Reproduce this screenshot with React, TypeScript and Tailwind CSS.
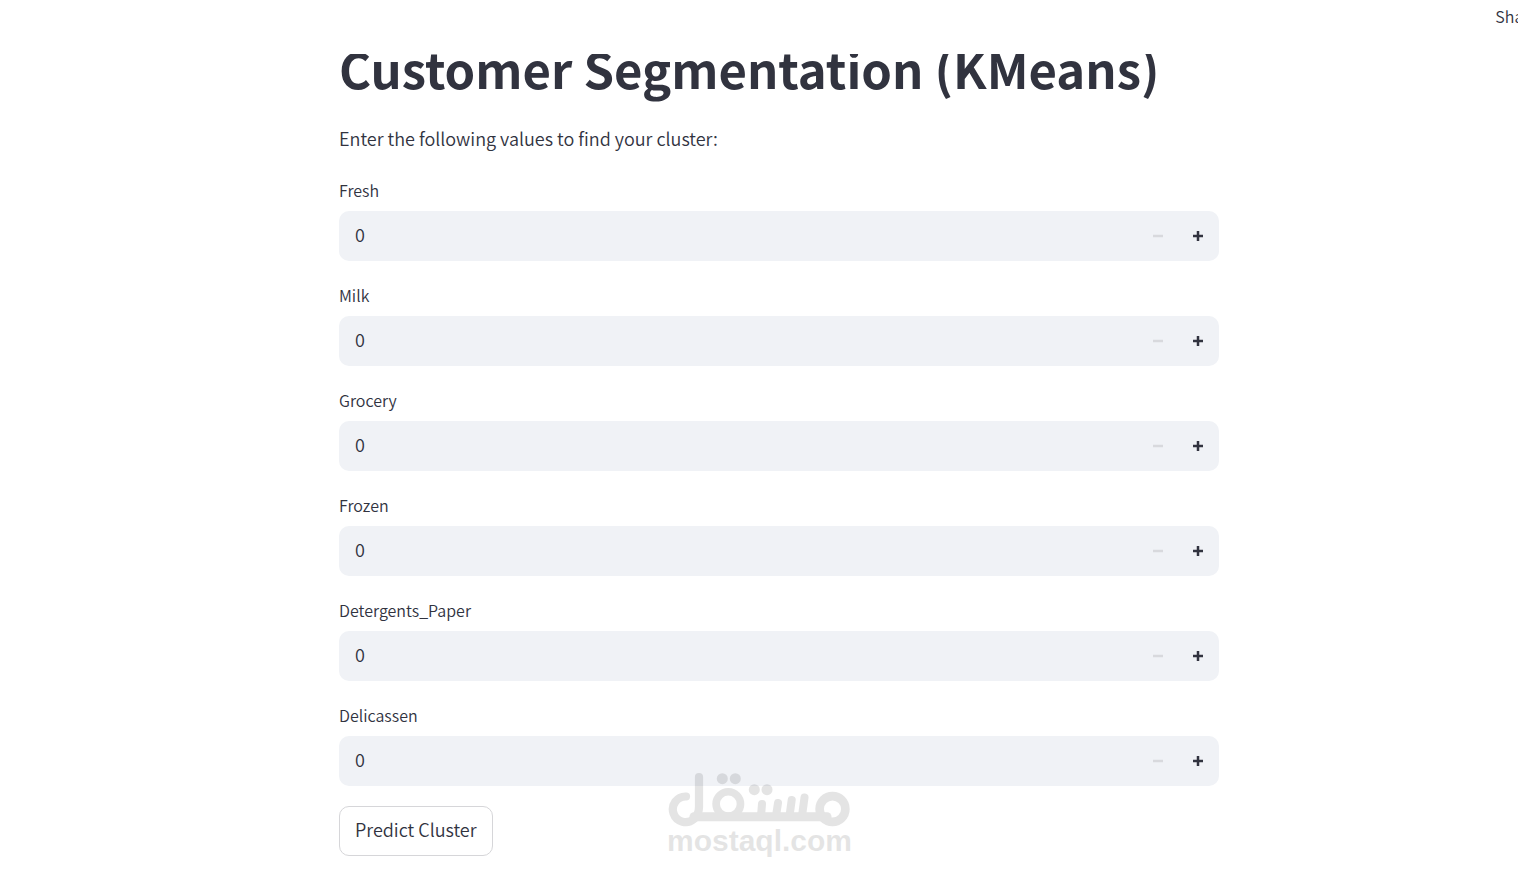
import { useState } from 'react'

const FIELDS = [
  'Fresh',
  'Milk',
  'Grocery',
  'Frozen',
  'Detergents_Paper',
  'Delicassen',
]

interface NumberFieldProps {
  label: string
  value: number
  onChange: (value: number) => void
}

function NumberField({ label, value, onChange }: NumberFieldProps) {
  const id = `field-${label}`

  return (
    <div>
      <label htmlFor={id} className="mb-[7px] block text-base font-[350] leading-7">
        {label}
      </label>
      <div className="flex h-[50px] overflow-hidden rounded-[10px] bg-[#f0f2f6] pr-px">
        <input
          id={id}
          type="text"
          inputMode="numeric"
          value={value}
          onChange={(e) => onChange(Math.max(0, Number(e.target.value) || 0))}
          className="min-w-0 flex-1 bg-transparent px-4 pb-1 text-lg font-[350] leading-7 outline-none"
        />
        <button
          type="button"
          aria-label={`Decrease ${label}`}
          disabled={value === 0}
          onClick={() => onChange(value - 1)}
          className="flex w-10 items-center justify-center disabled:text-[#d8d9dd]"
        >
          <svg width="10" height="10" viewBox="0 0 10 10" fill="currentColor">
            <path d="M0 3.75h10v2.5H0z" />
          </svg>
        </button>
        <button
          type="button"
          aria-label={`Increase ${label}`}
          onClick={() => onChange(value + 1)}
          className="flex w-10 items-center justify-center"
        >
          <svg width="10" height="10" viewBox="0 0 10 10" fill="currentColor">
            <path d="M3.75 0h2.5v3.75H10v2.5H6.25V10h-2.5V6.25H0v-2.5h3.75z" />
          </svg>
        </button>
      </div>
    </div>
  )
}

function Watermark() {
  return (
    <div className="pointer-events-none absolute left-1/2 top-[772px] w-[184px] -translate-x-1/2 text-black opacity-10">
      <svg width="184" height="56" viewBox="0 0 184 56" fill="none" stroke="currentColor" strokeLinecap="round">
        {/* lam */}
        <path d="M19 24.5A12.8 12.8 0 1 0 27 47C30 44 32 40 32 35V5" strokeWidth="8.2" strokeLinejoin="round" />
        {/* baseline */}
        <path d="M27 44.8H160" strokeWidth="9" />
        {/* qaf */}
        <circle cx="61.3" cy="32" r="12.2" strokeWidth="7.6" />
        {/* ta and sin teeth */}
        <path d="M94 44l1-12M109 44l2-13M122.5 44l2.2-16M135 44l2.5-18.5" strokeWidth="8" />
        {/* mim */}
        <circle cx="165.5" cy="37" r="12.9" strokeWidth="8.6" />
        <g fill="currentColor" stroke="none">
          <circle cx="55.3" cy="6.7" r="5.5" />
          <circle cx="68.3" cy="6.7" r="5.5" />
          <circle cx="87.3" cy="17.7" r="5.5" />
          <circle cx="100" cy="17.7" r="5.5" />
        </g>
      </svg>
      <div className="text-center font-['Liberation_Sans',sans-serif] text-[30px] font-bold leading-[26px]">
        mostaql.com
      </div>
    </div>
  )
}

export default function App() {
  const [values, setValues] = useState<number[]>(FIELDS.map(() => 0))

  const setValue = (index: number, value: number) => {
    setValues((prev) => prev.map((v, i) => (i === index ? value : v)))
  }

  return (
    <div className="relative min-h-screen overflow-hidden bg-white font-['Noto_Sans_CJK_SC',sans-serif] text-[#31333f]">
      {/* the page is wider than the window, so Share runs off the right edge */}
      <div className="-mr-10">
        <header className="flex h-[54px] justify-end px-5 py-0.5">
          <button type="button" className="h-7 text-base font-[350] leading-7">
            Share
          </button>
        </header>

        <main className="overflow-hidden px-5">
          <div className="mx-auto max-w-[880px] pb-5">
            <h1 className="-mt-[19px] whitespace-nowrap text-[49px] font-bold leading-[66px]">
              Customer Segmentation (KMeans)
            </h1>
            <p className="mt-[21px] text-lg font-[350] leading-8">
              Enter the following values to find your cluster:
            </p>

            <form className="mt-[22px] flex flex-col gap-5" onSubmit={(e) => e.preventDefault()}>
              {FIELDS.map((label, i) => (
                <NumberField
                  key={label}
                  label={label}
                  value={values[i]}
                  onChange={(value) => setValue(i, value)}
                />
              ))}
              <button
                type="submit"
                className="h-[50px] self-start rounded-[10px] border border-[#d6d6d9] bg-white px-[15px] pb-1 text-lg font-[350] leading-7"
              >
                Predict Cluster
              </button>
            </form>
          </div>
        </main>
      </div>
      <Watermark />
    </div>
  )
}
